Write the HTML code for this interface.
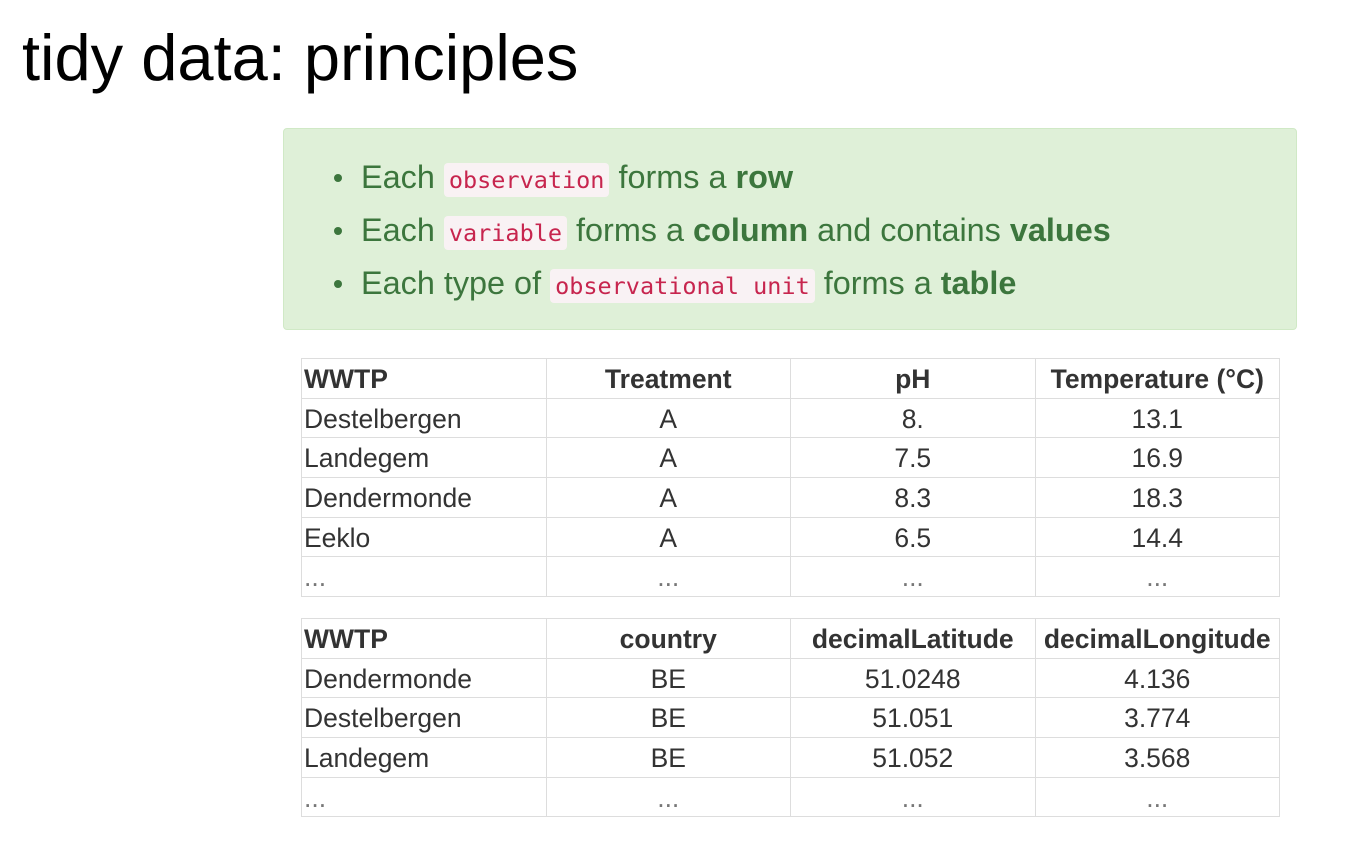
<!DOCTYPE html>
<html><head><meta charset="utf-8"><style>
body{margin:0;width:1348px;height:843px;background:#fff;font-family:"Liberation Sans",Arial,sans-serif;position:relative;overflow:hidden}
h1{position:absolute;left:22px;top:20px;margin:0;font-weight:normal;font-size:65px;color:#000;line-height:76px}
.box{position:absolute;left:283px;top:128px;width:1012px;height:200px;background:#dff0d8;border:1px solid #d0e9c6;border-radius:4px;color:#3c763d}
.box div.l{position:absolute;left:77px;font-size:32.4px;line-height:38px;white-space:nowrap}
.box div.l::before{content:"";position:absolute;left:-27px;top:16px;width:8px;height:8px;border-radius:50%;background:#3c763d}
code{font-family:"DejaVu Sans Mono","Liberation Mono",monospace;font-size:23.5px;color:#c7254e;background:#f9f2f4;padding:3px 5px;border-radius:4px}
table{position:absolute;left:301px;border-collapse:collapse;font-size:26.5px;color:#333;table-layout:fixed;width:979px}
td{border:1px solid #ddd;height:39.7px;padding:2px 2px 0;text-align:center;box-sizing:border-box;white-space:nowrap}
td:first-child{text-align:left}
tr:first-child td{font-weight:bold}
.d td{color:#777}
</style></head><body>
<h1>tidy data: principles</h1>
<div class="box">
<div class="l" style="top:29px">Each <code>observation</code> forms a <b>row</b></div>
<div class="l" style="top:82px">Each <code>variable</code> forms a <b>column</b> and contains <b>values</b></div>
<div class="l" style="top:135px">Each type of <code>observational unit</code> forms a <b>table</b></div>
</div>
<table style="top:358px">
<tr><td>WWTP</td><td>Treatment</td><td>pH</td><td>Temperature (°C)</td></tr>
<tr><td>Destelbergen</td><td>A</td><td>8.</td><td>13.1</td></tr>
<tr><td>Landegem</td><td>A</td><td>7.5</td><td>16.9</td></tr>
<tr><td>Dendermonde</td><td>A</td><td>8.3</td><td>18.3</td></tr>
<tr><td>Eeklo</td><td>A</td><td>6.5</td><td>14.4</td></tr>
<tr class="d"><td>...</td><td>...</td><td>...</td><td>...</td></tr>
</table>
<table style="top:618px">
<tr><td>WWTP</td><td>country</td><td>decimalLatitude</td><td>decimalLongitude</td></tr>
<tr><td>Dendermonde</td><td>BE</td><td>51.0248</td><td>4.136</td></tr>
<tr><td>Destelbergen</td><td>BE</td><td>51.051</td><td>3.774</td></tr>
<tr><td>Landegem</td><td>BE</td><td>51.052</td><td>3.568</td></tr>
<tr class="d"><td>...</td><td>...</td><td>...</td><td>...</td></tr>
</table>
</body></html>
